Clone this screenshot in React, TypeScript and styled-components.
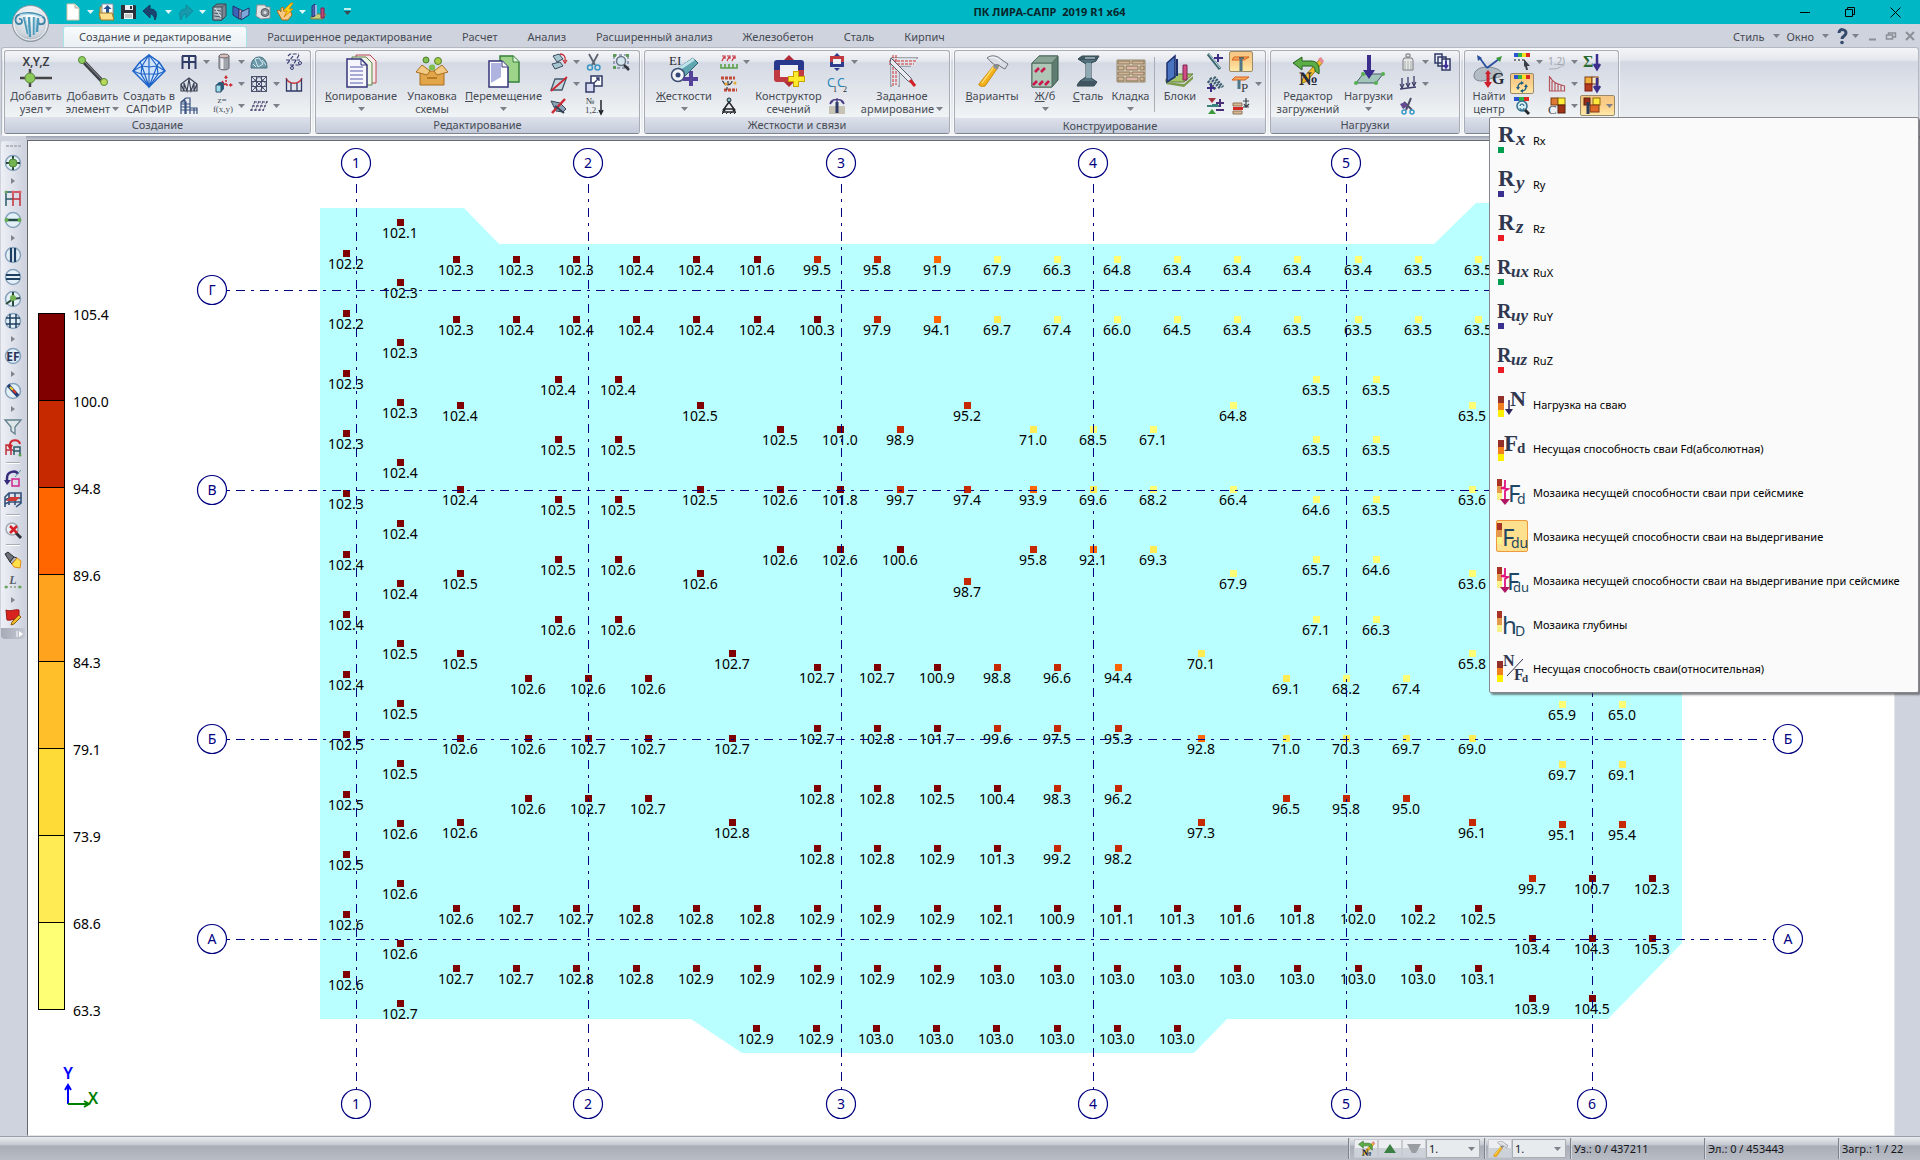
import React from "react";
import styled, { createGlobalStyle, css } from "styled-components";

/* ---------- base ---------- */

const Global = createGlobalStyle`
  html, body { margin: 0; padding: 0; }
  *, *::before, *::after { box-sizing: border-box; }
  body { background: #cfd3dd; }
  button, select { font: inherit; color: inherit; }
`;

const UI_FONT = '"Noto Sans", "Open Sans", sans-serif';
const SERIF = "Liberation Serif, serif";
const SANS = "Noto Sans, sans-serif";

const App_ = styled.div`
  position: relative;
  display: flex;
  flex-direction: column;
  min-height: 100vh;
  overflow: hidden;
  background: #cfd3dd;
  color: #474b55;
  font: 11px/13px ${UI_FONT};
`;

const PlainButton = styled.button`
  display: inline-flex;
  align-items: center;
  justify-content: center;
  padding: 0;
  border: 0;
  background: none;
`;

const Glyph = styled.svg`
  display: block;
  flex: none;
  overflow: visible;
`;

/* ---------- title bar ---------- */

const TitleBar = styled.header`
  display: grid;
  grid-template-columns: 1fr auto 1fr;
  align-items: center;
  height: 24px;
  padding: 0 14px 0 62px;
  background: #00b7c6;
`;

const QuickBar = styled.div`
  display: flex;
  align-items: center;
  height: 22px;
`;

const QuickButton = styled(PlainButton)`
  width: 22px;
  height: 22px;
`;

const QuickArrow = styled(PlainButton)`
  width: 12px;
  height: 22px;
`;

const Title = styled.h1`
  margin: 0;
  padding-left: 131px;
  color: #06262b;
  font-size: 11px;
  line-height: 22px;
  font-weight: 700;
  white-space: pre;
`;

const WindowButtons = styled.div`
  display: flex;
  justify-content: flex-end;
  gap: 23px;
`;

const WindowButton = styled(PlainButton)`
  width: 22px;
  height: 22px;
`;

const Orb = styled(PlainButton)`
  position: absolute;
  left: 11px;
  top: 4px;
  width: 39px;
  height: 39px;
`;

/* ---------- tabs ---------- */

const TabRow = styled.nav`
  display: flex;
  align-items: flex-end;
  height: 23px;
  padding: 0 4px 0 63px;
`;

const Tab = styled.button<{ $active?: boolean }>`
  height: 21px;
  padding: 0 15px;
  border: 0;
  background: none;
  line-height: 20px;
  white-space: nowrap;
  ${(p) =>
    p.$active &&
    css`
      margin-right: 5px;
      border: 1px solid #a9e3ea;
      border-bottom: 0;
      border-radius: 3px 3px 0 0;
      background: linear-gradient(#f8fbfc, #e9eff4);
    `}
`;

const TabTools = styled.div`
  display: flex;
  align-items: center;
  gap: 7px;
  height: 22px;
  margin-left: auto;
`;

const TextButton = styled(PlainButton)<{ $tight?: boolean }>`
  gap: ${(p) => (p.$tight ? 4 : 8)}px;
`;

/* ---------- ribbon ---------- */

const Ribbon = styled.section`
  display: flex;
  gap: 4px;
  height: 89px;
  margin: 0 1px;
  padding: 2px;
  border: 1px solid #b4b8c0;
  border-bottom: 2px solid #f6f8fa;
  border-radius: 3px;
  background: linear-gradient(#f4f5f8 0, #e4e7ed 12px, #d3d7e2 14px, #e2e6ec 45px, #eef2f3 100%);
`;

const RibbonEdge = styled.div`
  height: 4px;
  margin-left: 26px;
  background: linear-gradient(#9aa0ad, #c5cad6);
`;

const Group = styled.section<{ $width: number }>`
  display: flex;
  flex-direction: column;
  flex: none;
  width: ${(p) => p.$width}px;
  height: 84px;
  border: 1px solid #a9acb4;
  border-bottom-color: #7e828b;
  border-radius: 3px;
  overflow: hidden;
  background: linear-gradient(#f4f5f8 0, #e4e7ed 10px, #d5d9e4 12px, #e2e6ec 42px, #f0f4f5 66px);
  box-shadow: 0 0 0 1px rgba(255, 255, 255, 0.7);
`;

const GroupBody = styled.div<{ $pad: number }>`
  display: flex;
  flex: 1;
  padding-left: ${(p) => p.$pad}px;
`;

const Caption = styled.h2`
  margin: 0;
  height: 16px;
  background: linear-gradient(#dde1eb, #c3cad9);
  font-size: 11px;
  line-height: 16px;
  font-weight: 400;
  text-align: center;
`;

const Big = styled.button<{ $width: number }>`
  display: flex;
  flex-direction: column;
  align-items: center;
  flex: none;
  width: ${(p) => p.$width}px;
  padding: 2px 0 0;
  border: 0;
  background: none;
  line-height: 13px;
  white-space: nowrap;
`;

const BigArt = styled.span`
  display: flex;
  align-items: center;
  justify-content: center;
  height: 35px;
  margin-bottom: 1px;
`;

const Line = styled.span`
  display: flex;
  align-items: center;
  justify-content: center;
  gap: 2px;
  height: 13px;
`;

const Column = styled.div<{ $gap?: number; $width?: number }>`
  display: grid;
  grid-auto-rows: 22px;
  flex: none;
  width: ${(p) => p.$width ?? 35}px;
  margin-left: ${(p) => p.$gap ?? 0}px;
`;

const Tool = styled.button<{ $on?: boolean; $wide?: boolean }>`
  display: flex;
  align-items: center;
  justify-content: flex-start;
  width: ${(p) => (p.$wide ? 35 : 24)}px;
  height: 21px;
  padding: 0;
  border: 1px solid transparent;
  border-radius: 2px;
  background: none;
  ${(p) =>
    p.$on &&
    css`
      border-color: #9a8a6c;
      background: linear-gradient(#f5c684, #fbd08a 50%, #ffe9a8);
    `}
`;

const ToolIcon = styled.span`
  display: flex;
  justify-content: center;
  flex: none;
  width: 22px;
`;

const ToolArrow = styled.span`
  display: flex;
  padding-left: 3px;
`;

const Divider = styled.div`
  width: 1px;
  height: 55px;
  margin: 6px 2px;
  background: #a9adb5;
`;

/* ---------- work area ---------- */

const Work = styled.main`
  display: flex;
  flex: 1;
  min-height: 0;
`;

const SideBar = styled.aside`
  flex: none;
  width: 27px;
  padding-left: 1px;
`;

const SideTools = styled.div`
  display: flex;
  flex-direction: column;
  align-items: center;
  width: 24px;
  margin-top: 1px;
  border-radius: 3px;
  overflow: hidden;
  background: linear-gradient(90deg, #eef0f6, #cdd2de);
`;

const Grip = styled.div`
  width: 15px;
  height: 2px;
  margin: 4px 0 5px;
  background: repeating-linear-gradient(90deg, #b2b6bf 0 3px, transparent 3px 4px);
`;

const SideButton = styled(PlainButton)`
  width: 24px;
  height: 22px;
`;

const SideMore = styled(PlainButton)`
  width: 24px;
  height: 13px;
`;

const SideRule = styled.hr`
  width: 14px;
  height: 8px;
  margin: 0;
  border: 0;
  background: linear-gradient(transparent 3px, #a9adb6 3px 4px, #fff 4px 5px, transparent 5px);
`;

const SideEnd = styled.div`
  display: flex;
  align-items: center;
  justify-content: flex-end;
  align-self: stretch;
  height: 11px;
  padding-right: 2px;
  border-radius: 0 0 3px 3px;
  background: linear-gradient(90deg, #a5aab6, #c3c8d3);
`;

const Viewport = styled.section`
  position: relative;
  flex: 1;
  min-width: 0;
  margin-right: 25px;
  border: 1px solid #e4e5e8;
  border-top-color: #66686d;
  border-left-color: #66686d;
  overflow: hidden;
  background: #fff;
`;

const Plan = styled.svg`
  display: block;
  font: 14px ${UI_FONT};
`;

const Legend = styled.ol`
  position: absolute;
  left: 10px;
  top: 172px;
  margin: 0;
  padding: 0;
  list-style: none;
  color: #000;
  font-size: 14px;
  line-height: 18px;
`;

const LegendStep = styled.li<{ $fill?: string }>`
  display: flex;
  gap: 8px;
  height: 87px;
  &::before {
    content: "";
    width: 27px;
    height: ${(p) => (p.$fill ? 88 : 0)}px;
    border: ${(p) => (p.$fill ? "1px solid #000" : "0")};
    background: ${(p) => p.$fill ?? "none"};
  }
`;

const LegendValue = styled.span`
  height: 18px;
  margin-top: -7px;
`;

/* ---------- status bar ---------- */

const StatusBar = styled.footer`
  display: flex;
  align-items: center;
  justify-content: flex-end;
  height: 24px;
  border-top: 1px solid #9a9ea8;
  background: linear-gradient(#e9ebee 0, #c3c7d0 8px, #a9adb7 9px, #b9bdc5 100%);
  color: #14161a;
`;

const StatusPart = styled.div<{ $width: number; $pad?: number }>`
  display: flex;
  align-items: center;
  flex: none;
  width: ${(p) => p.$width}px;
  height: 21px;
  padding-left: ${(p) => p.$pad ?? 3}px;
  border-left: 1px solid #7e828a;
  box-shadow: inset 1px 0 0 #d5d8de;
  white-space: nowrap;
`;

const StatusButton = styled(PlainButton)`
  flex: none;
  width: 24px;
  height: 19px;
  border: 1px solid #c7cbd1;
  background: linear-gradient(#eceef1 50%, #cdd2d8 50%);
`;

const Picker = styled.label`
  display: flex;
  align-items: center;
  width: 54px;
  height: 19px;
  border: 1px solid #a9adb4;
  background: #e8ebee;
`;

const PickerSelect = styled.select`
  width: 41px;
  height: 17px;
  padding: 0 2px;
  border: 0;
  appearance: none;
  background: none;
`;

/* ---------- drop-down menu ---------- */

const Menu = styled.ul`
  position: absolute;
  top: 117px;
  right: 1px;
  z-index: 5;
  width: 430px;
  margin: 0;
  padding: 0 0 2px;
  border: 1px solid #85878c;
  border-radius: 2px;
  background: #fafafa;
  box-shadow: 2px 2px 2px rgba(60, 60, 60, 0.6);
  list-style: none;
`;

const MenuButton = styled.button`
  display: flex;
  align-items: center;
  gap: 5px;
  width: 100%;
  height: 44px;
  padding: 0 6px;
  border: 0;
  background: none;
  color: #000;
  text-align: left;
  white-space: nowrap;
`;

const MenuArt = styled.span<{ $on?: boolean }>`
  display: flex;
  flex: none;
  width: 32px;
  height: 32px;
  border: 1px solid ${(p) => (p.$on ? "#f0983c" : "transparent")};
  border-radius: 2px;
  background: ${(p) => (p.$on ? "#ffe08f" : "none")};
`;

/* ---------- drawings ---------- */

function Art({ s = 18, w, h, children }: { s?: number; w?: number; h?: number; children: React.ReactNode }) {
  const W = w ?? s;
  const H = h ?? s;
  return (
    <Glyph width={W} height={H} viewBox={`0 0 ${W} ${H}`} fill="none" aria-hidden="true">
      {children}
    </Glyph>
  );
}

const Arrow = ({ fill = "#7d8088" }: { fill?: string }) => (
  <Glyph width="7" height="4" viewBox="0 0 7 4" aria-hidden="true">
    <path d="M0 0h7L3.5 4z" fill={fill} />
  </Glyph>
);

const Side = () => (
  <Glyph width="4" height="6" viewBox="0 0 4 6" aria-hidden="true">
    <path d="M0 0l4 3-4 3z" fill="#80848d" />
  </Glyph>
);

const NAVY = "#2f3a66";
const GREEN = "#3c9a3c";

const Hammer = ({ s = 18 }: { s?: number }) => (
  <Glyph width={s} height={s} viewBox="0 0 32 32" fill="none" aria-hidden="true">
    <path d="M19 9l4 2L9 31c-2 1-7 0-6-2z" fill="#f3b21b" stroke="#c98a0c" />
    <path d="M19 10L6 28" stroke="#ffd867" strokeWidth="1.500" />
    <path d="M19 8l4 3-2 4-4-3z" fill="#8a8f99" />
    <path d="M11 3c5-4 11-2 15 2l6 4-3 5-4-2c-1-2-4-3-6-2l-4-3c-1-2-3-3-4-4z" fill="#d9dde3" stroke="#6f7580" />
    <path d="M13 3c4-2 8 0 12 4" stroke="#fff" />
  </Glyph>
);

const LoadEdit = ({ s = 18 }: { s?: number }) => (
  <Glyph width={s} height={s} viewBox="0 0 32 32" fill="none" aria-hidden="true">
    <path d="M22 11l6-7 3 3-16 19-6 3 2-6z" fill="#f2bc2c" stroke="#a37412" />
    <path d="M26 4l3-2 3 4-2 3z" fill="#e58b95" />
    <path d="M1 8l9-6v4h9c6 0 9 4 8 13l-4-3c0-4-2-5-5-5h-8v4z" fill="#5cad46" stroke="#25631c" />
    <text x="7" y="30" fontFamily={SERIF} fontWeight="700" fontSize="19" fill="#262a3a">№</text>
  </Glyph>
);

const quick = {
  doc: <Art><path d="M3 1h8l4 4v12H3z" fill="#fff" stroke="#d5c9a8" /><path d="M11 1v4h4" fill="#ddd" stroke="#b9b09a" /></Art>,
  open: <Art><path d="M2 4h13v12H2z" fill="#f6d071" stroke="#a77d25" /><path d="M4 1h11v10H4z" fill="#f8fafc" stroke="#8892a5" /><path d="M9.500 2l4 4h-2.500v5h-3V6H5.500z" fill="#24508f" /><path d="M1 10h13l2 7H3z" fill="#fbdf8d" stroke="#a77d25" /></Art>,
  save: <Art><path d="M1 2h14l1 1v13H1z" fill="#2c3039" /><path d="M5 2h8v5H5z" fill="#e9edf1" /><path d="M10 3h2v3h-2z" fill="#2c3039" /><path d="M4 10h9v6H4z" fill="#f6f7f8" /><path d="M5 12h7M5 14h7" stroke="#999" /></Art>,
  undo: <Art><path d="M8 2v4c6 0 8 4 5 11-1-5-3-6-5-6v4L1 8z" fill="#1b4470" stroke="#15365b" /></Art>,
  redo: <Art><path d="M10 2v4C4 6 2 10 5 17c1-5 3-6 5-6v4l7-7z" fill="#159bad" stroke="#14899a" /></Art>,
  server: <Art><path d="M3 4l4-3h9v12l-4 4H3z" fill="#788592" stroke="#3b4650" /><path d="M3 4h9v13H3z" fill="#a6b5bf" stroke="#3b4650" /><path d="M12 4l4-3M4 7l7 1M4 10l7 1M4 13l7 1" stroke="#4a5964" /><path d="M5 5l6 9" stroke="#e2eaee" /></Art>,
  book: <Art><path d="M1 3l6 3v10l-6-4z" fill="#3c64b8" stroke="#22336c" /><path d="M7 6l4 2v7l-4 1z" fill="#e7a7b0" stroke="#22336c" /><path d="M9 9l8-4v7l-8 5z" fill="#7fa6d9" stroke="#22336c" /></Art>,
  camera: <Art><path d="M3 2h8l1 2h4v11l-9 1-5-3z" fill="#e3e5e7" stroke="#8e8f92" /><circle cx="11" cy="9.500" r="4" fill="#8b8e94" stroke="#55585e" /><circle cx="11" cy="9.500" r="1.500" fill="#d8e2ea" /></Art>,
  bolt: <Art><path d="M1 8l2-1 2 2V5l2-1 1 4 2-1 5 2 1 3-4 5H6z" fill="#f7c984" stroke="#a86c1a" /><path d="M15 0L7 8h4l-3 6 9-8h-4l4-6z" fill="#ffd21e" stroke="#d28e05" /></Art>,
  model: <Art><path d="M1 14l4-3h11l-3 5H1z" fill="#c7cf7b" stroke="#7a8141" /><path d="M2 3l3-2v12l-3 1z" fill="#4b66b4" stroke="#27386f" /><path d="M5 2h2v10H5z" fill="#9cb2e0" /><path d="M11 5h3v10h-3z" fill="#c0467c" stroke="#7d2450" /></Art>,
};

const big = {
  xyz: <Art w={40} h={34}><text x="20" y="12" textAnchor="middle" fontFamily={SANS} fontSize="12" fontWeight="600" fill="#3c3c44">X,Y,Z</text><path d="M4 24h32M14 15v18" stroke="#444" strokeWidth="2.500" /><circle cx="14" cy="24" r="5" fill="#8bc95b" stroke="#5c8740" /></Art>,
  element: <Art w={34} h={34}><path d="M7 7l20 21" stroke="#3f4147" strokeWidth="4" /><path d="M8 7l19 20" stroke="#8f949c" /><circle cx="6" cy="6" r="3.500" fill="#8fd160" stroke="#57863a" /><circle cx="28" cy="28" r="3.500" fill="#b9d95b" stroke="#57863a" /></Art>,
  sapfir: <Art w={34} h={34}><path d="M17 1l10 7 6 9-16 16L1 17l7-9z" fill="#cfe3fa" stroke="#1e63c8" strokeWidth="1.500" /><path d="M17 1v32M17 1l-7 11 7 21 8-21zM8 8l2 4-1 8 8 13 9-13-1-8 2-4M1 17l9-5 7 1 8-1 8 5M1 17l8 3h17l7-3" stroke="#1e63c8" strokeWidth="1.200" /></Art>,
  copy: <Art w={34} h={34}><path d="M12 1h14l6 6v22H12z" fill="#fbe9ea" stroke="#b44a52" /><path d="M8 3h14l6 6v22H8z" fill="#eef6e8" stroke="#5d8447" /><path d="M3 5h14l6 6v22H3z" fill="#f5f6fb" stroke="#34357a" strokeWidth="1.500" /><path d="M17 5v6h6" stroke="#34357a" /><path d="M6 13h13M6 17h13M6 21h13M6 25h13M6 29h13" stroke="#8d90c8" strokeWidth="1.500" /></Art>,
  box: <Art w={34} h={34}><circle cx="11" cy="6" r="3" fill="#7fbf52" stroke="#4b7d2d" /><circle cx="23" cy="7" r="3.500" fill="#a9cc46" stroke="#4b7d2d" /><path d="M5 17h24v14H5z" fill="#e3a549" stroke="#a66f1f" /><path d="M1 18l6-7 8 6-3 4zM33 18l-6-7-8 6 3 4z" fill="#f3c983" stroke="#a66f1f" /><path d="M12 23h10v2H12z" fill="#b77b28" /><path d="M14 12c2-2 5-2 6 0v4h-6z" fill="#7fbf52" /></Art>,
  move: <Art w={34} h={34}><path d="M13 2h13l6 6v20H13z" fill="#9dd48a" stroke="#35803a" strokeWidth="1.500" /><path d="M26 2v6h6" fill="#e4f4df" stroke="#35803a" /><path d="M2 7h13l6 6v20H2z" fill="#fff" stroke="#34357a" strokeWidth="1.500" /><path d="M4 9h10v14l-10 6z" fill="#aeb3e0" /><path d="M15 7v6h6" fill="#fff" stroke="#34357a" /></Art>,
  stiff: <Art w={34} h={34}><path d="M7 17L26 4l5 5-16 16z" fill="#5fa6b1" stroke="#2b6370" /><path d="M9 17L27 5" stroke="#bfe5ea" strokeWidth="3" /><circle cx="11" cy="21" r="6.500" fill="#f0f3f7" stroke="#3d4d73" strokeWidth="1.500" /><circle cx="11" cy="21" r="2.500" fill="#344776" /><text x="2" y="11" fontFamily={SERIF} fontSize="13" fill="#2a2a33">EI</text><path d="M24 17v15M16 25h15" stroke="#54419a" strokeWidth="4" /></Art>,
  section: <Art w={34} h={34}><path d="M17 1l5 5v22l-5 5-5-5V6z" fill="#b02b35" /><path d="M5 6h24a3 3 0 013 3v9H2V9a3 3 0 013-3z" fill="#28388c" /><path d="M2 16h30v9a3 3 0 01-3 3H5a3 3 0 01-3-3z" fill="#c03a42" /><path d="M8 11h18v12H8z" fill="#eef0f6" /><path d="M24 17v16M16 25h17" stroke="#c9a400" strokeWidth="6" /><path d="M24 18v14M17 25h15" stroke="#ffea2b" strokeWidth="4" /></Art>,
  rebar: <Art w={34} h={34}><path d="M6 4h27M6 12h20M6 4v29M14 12v21" stroke="#8a919b" strokeWidth="1.500" /><path d="M6 4h25v8H14v19H6z" fill="#dfe3ea" opacity=".8" /><path d="M8 1v31M11 1v30M4 7h28M4 10h25" stroke="#cf2e32" strokeDasharray="3 1" /><path d="M6 4l20 20 3 6-6-3L5 9z" fill="#e9eaf0" stroke="#5b6170" /><path d="M25 26l5 6" stroke="#d51f26" strokeWidth="3" /></Art>,
  concrete: <Art w={30} h={34}><path d="M2 9l7-7h19v24l-6 7H2z" fill="#5f7d70" stroke="#37564a" /><path d="M2 9h20v24H2z" fill="#b0c7b8" stroke="#4f6b5e" /><path d="M2 9l7-7h19l-6 7z" fill="#8aa596" stroke="#4f6b5e" /><path d="M5 18l4-4M11 18l4-4M3 31l4-4M9 31l4-4M15 31l4-4" stroke="#c8174e" strokeWidth="2.500" /></Art>,
  steel: <Art w={30} h={34}><path d="M5 5l4-3h17l-3 5-5 2v15l6 4-3 4H4l3-5 6-4V10z" fill="#52707b" stroke="#2e444e" /><path d="M13 9l5 0v15l-5 0z" fill="#8fa9b3" /><path d="M5 5l4-3h17l-3 4H5zM4 30l3-3h17l-3 5H4z" fill="#3f5660" /><path d="M12 4h10" stroke="#d8e7ed" /></Art>,
  brick: <Art w={30} h={28}><path d="M1 3h28v22H1z" fill="#e0d6c0" stroke="#96876a" /><path d="M2 4h12v3H2zM16 4h12v3H16zM2 9h6v4H2zM10 9h12v4H10zM24 9h4v4h-4zM2 15h12v3H2zM16 15h12v3H16zM2 20h6v4H2zM10 20h12v4H10zM24 20h4v4h-4z" fill="#cdb796" stroke="#8c7558" /><path d="M11 10h10v2H11zM17 16h10v1H17zM11 21h10v2H11z" fill="#dfb5ab" /></Art>,
  blocks: <Art w={30} h={34}><path d="M1 25l9-5h18l-9 8H1z" fill="#a3c469" stroke="#5f7c37" /><path d="M1 28l18 2v3L1 30zM19 30l9-8v3l-9 8z" fill="#7d9c4c" /><path d="M2 9l8-7v21l-8 5z" fill="#4a74bf" stroke="#1d2f6f" strokeWidth="1.500" /><path d="M12 5v17" stroke="#1d2f6f" strokeWidth="2" /><path d="M18 11h4v15h-4z" fill="#d34c86" stroke="#7d2450" /></Art>,
  load: <Art w={34} h={34}><path d="M4 29l7-9h20l-7 9z" fill="#a2c6ba" stroke="#43586b" /><path d="M17 1v17" stroke="#3b2d8c" strokeWidth="4" /><path d="M11 16h12l-6 9z" fill="#3b2d8c" /><circle cx="4" cy="29" r="2" fill="#56b04e" /><circle cx="24" cy="29" r="2" fill="#56b04e" /><circle cx="31" cy="20" r="2" fill="#56b04e" /><circle cx="11" cy="20" r="2" fill="#56b04e" /></Art>,
  centre: <Art w={34} h={34}><path d="M2 22c0-6 6-9 13-9s15 3 15 7-5 3-9 4-8 3-12 3-7-2-7-5z" fill="#b3bcc4" stroke="#7c868f" /><path d="M15 14L7 3M15 14l12-9" stroke="#2a4f9c" strokeWidth="1.800" /><path d="M5 1l5 3-4 3z" fill="#2a4f9c" /><path d="M30 2l-2 6-4-4z" fill={GREEN} /><path d="M16 19v12" stroke="#cf1f2c" strokeWidth="3" /><path d="M12 28h8l-4 6zM13 20h6l-3-4z" fill="#cf1f2c" /><text x="20" y="30" fontFamily={SERIF} fontWeight="700" fontSize="16" fill="#262a33">G</text></Art>,
};

const small = {
  frame: <Art><path d="M2 3h14M2 9h14M2.500 3v13M9 3v13M15.500 3v13" stroke={NAVY} strokeWidth="2" /></Art>,
  truss: <Art><path d="M1 16V9l8-6 8 6v7zM4 16V8l3 8 2-12 2 12 3-8v8M1 9l3 7M17 9l-3 7" stroke="#3c4355" strokeWidth="1.200" /></Art>,
  building: <Art><path d="M1 17V5l5-4h4v10h7v6M1 7h9M1 10h9M1 13h16M5 1v16M10 11v6M14 11v6M6 17V5H1" stroke="#36507f" strokeWidth="1.200" /></Art>,
  cylinder: <Art><path d="M4 3v12c0 2.500 10 2.500 10 0V3z" fill="#a0a3aa" stroke="#676a72" /><path d="M7 4v12" stroke="#e9eaee" strokeWidth="3" /><ellipse cx="9" cy="3" rx="5" ry="2" fill="#ddbcbc" stroke="#676a72" /></Art>,
  extrude: <Art><path d="M1 10l3-3h5v7l-3 3H1z" fill="#2b5c7c" /><path d="M1 10h5v7H1z" fill="#9fe0ea" stroke="#2b4a66" /><path d="M11 10V2M11 10H17M10 10l-3-4" stroke="#cb2d34" strokeWidth="1.500" strokeDasharray="2 1" /><path d="M11 0l2 3H9zM18 10l-3-2v4z" fill="#cb2d34" /></Art>,
  fxy: <Art w={20}><text x="8" y="6" textAnchor="middle" fontFamily={SERIF} fontSize="9" fill="#4c5262">z=</text><text x="9" y="15" textAnchor="middle" fontFamily={SERIF} fontSize="9" fill="#4c5262">f(x,y)</text></Art>,
  dome: <Art><path d="M1 15c0-8 4-11 8-11s8 3 8 11z" fill="#6d99ab" stroke="#47707f" /><path d="M5 6l4-1 4 6-5 3zM3 11l3 3M12 7l4 5" stroke="#d3e8ee" /></Art>,
  mesh: <Art><path d="M1.500 1.500h15v15h-15zM1.500 6.500h15M1.500 11.500h15M6.500 1.500v15M11.500 1.500v15M1.500 1.500l15 15M16.500 1.500l-15 15M1.500 9l7.500 7.500L16.500 9 9 1.500z" stroke="#3d4461" strokeWidth=".9" /></Art>,
  plate: <Art><path d="M4 5h14M2 9h14M0 13h14M5 4L1 14M9 4L5 14M13 4L9 14M17 4l-4 10" stroke="#4a466f" strokeDasharray="3 1" /></Art>,
  scheme: <Art><path d="M3 3l2-2h9M1 7h14M5 12h10M8 3L2 11M14 2L7 14" stroke="#3a3f75" strokeDasharray="4 1.500" strokeWidth="1.200" /><circle cx="15" cy="10" r="1.500" stroke="#3a3f75" /><circle cx="7" cy="15" r="1.500" stroke="#3a3f75" /></Art>,
  cable: <Art><path d="M1 3c3 7 13 7 16 0" stroke="#c8353a" strokeWidth="1.500" /><path d="M1.500 4v12h15V4M6 8v8M12 8v8" stroke={NAVY} strokeWidth="1.300" /></Art>,
  rotate: <Art><path d="M3 3l6-2 4 5-6 3zM2 11l8-2 3 4-8 3z" fill="#a6c6d2" stroke="#3d4b5d" /><path d="M10 1c4 0 6 3 5 7M13 7l2 3 2-3" stroke="#c92b34" strokeWidth="1.300" /></Art>,
  skew: <Art><path d="M5 4h11l-4 11H1z" fill="#c3d7df" stroke="#44566a" strokeWidth="1.300" /><path d="M1 16L17 2" stroke="#cc2934" strokeWidth="1.800" /></Art>,
  cutx: <Art><path d="M1 4l9 2 6 6-3 3-7-1z" fill="#8ba2b7" stroke="#374456" /><path d="M2 16L15 2" stroke="#cc2934" strokeWidth="2.500" /><path d="M5 9l9 7" stroke="#374456" strokeWidth="2" /></Art>,
  scissors: <Art><path d="M4 1l6 11M13 1L7 12" stroke="#5c6370" strokeWidth="1.800" /><circle cx="5" cy="14.500" r="2.500" stroke="#3a98c4" strokeWidth="1.500" /><circle cx="12.500" cy="14.500" r="2.500" stroke="#3a98c4" strokeWidth="1.500" /></Art>,
  scale: <Art><path d="M6 1h11v10H6z" fill="#fff" stroke={NAVY} strokeWidth="1.500" /><path d="M1 8h8v9H1z" fill="#d6d9ef" stroke={NAVY} strokeWidth="1.500" /><path d="M9 8l5-5M11 3h3v3" stroke={NAVY} strokeWidth="1.300" /></Art>,
  renumber: <Art><text x="1" y="7" fontFamily={SERIF} fontSize="9" fill="#3b3f49">№</text><text x="0" y="16" fontFamily={SERIF} fontSize="9" fill="#3b3f49">1,2.</text><path d="M16 3v13M14 13l2 4 2-4" stroke="#23252d" strokeWidth="1.500" /></Art>,
  zoomsel: <Art><path d="M2 2h14v13H2z" stroke="#50648a" strokeDasharray="3 2" /><circle cx="9" cy="8" r="4.500" fill="#d5e6ee" stroke="#69798a" strokeWidth="1.500" /><path d="M12 12l5 5" stroke="#30343c" strokeWidth="2.500" /><path d="M1 1h3v3H1zM14 1h3v3h-3zM1 13h3v3H1z" fill="#5d9a55" /></Art>,
  supports: <Art><path d="M1 11v4h16v-4M5 11v4M9 11v4M13 11v4" stroke="#58a04a" strokeWidth="1.600" /><path d="M2 8l2-4M7 8l2-4M12 8l2-4M2 3h3v3M7 3h3v3M12 3h3v3" stroke="#c92f39" strokeWidth="1.200" /></Art>,
  springs: <Art><path d="M1 3h14M4 15h13" stroke="#c24a38" strokeWidth="3" strokeDasharray="3 1" /><path d="M2 6c2 0 2 4 4 4M8 6v3M12 6c0 2-2 4-5 4M7 12v3" stroke="#34363d" strokeWidth="1.200" /><circle cx="6" cy="9" r="1.500" fill="#e8a62a" /><circle cx="15" cy="8" r="1.500" fill="#e8a62a" /></Art>,
  hinge: <Art><circle cx="9" cy="3" r="2" fill="#8ac5cf" stroke="#23252d" /><path d="M9 5L4 12h10zM2 15h14" stroke="#23252d" strokeWidth="1.500" /><path d="M2 17l2-2M6 17l2-2M10 17l2-2M14 17l2-2" stroke="#23252d" /><circle cx="4" cy="13" r="1.500" fill="#23252d" /><circle cx="14" cy="13" r="1.500" fill="#23252d" /></Art>,
  section: <Art><path d="M9 0l3 3H6zM9 18l3-3H6z" fill="#2f3c8e" /><path d="M2 3h14v6H2z" fill="#c03a42" /><path d="M2 9h14v5H2z" fill="#2f3c8e" /><path d="M5 6h8v5H5z" fill="#eef0f6" /></Art>,
  cc: <Art w={20}><text x="0" y="12" fontFamily={SANS} fontSize="12" fill="#2b86b8">C</text><text x="10" y="12" fontFamily={SANS} fontSize="12" fill="#2b86b8">C</text><text x="6" y="17" fontFamily={SERIF} fontSize="8" fill="#23252d">1</text><text x="16" y="17" fontFamily={SERIF} fontSize="8" fill="#23252d">2</text></Art>,
  pile: <Art><path d="M1 9h16v8H1z" fill="#c6c3b4" /><path d="M9 5v11" stroke={NAVY} strokeWidth="3" /><path d="M2 7c1-6 13-6 14 0M9 1v4M5 4l-3 3M13 4l3 3" stroke="#4b3f86" strokeWidth="1.300" /></Art>,
  barplus: <Art><path d="M2 1l12 15" stroke="#3c6670" strokeWidth="3" /><path d="M3 1l11 14" stroke="#c8e0e5" /><path d="M12 1v8M8 5h9" stroke="#3d2d86" strokeWidth="2" /></Art>,
  barsplus: <Art><path d="M4 3l10 10M8 2l9 10M2 6l8 9" stroke="#3c5d70" strokeWidth="3" strokeDasharray="2 1" /><path d="M5 9v8M1 13h8" stroke="#3d2d86" strokeWidth="2" /></Art>,
  merge: <Art><path d="M2 1h8L6 6z" fill="#a63240" /><path d="M6 12l4 5H2z" fill={GREEN} /><path d="M1 9h13M6 8h6" stroke="#39827d" strokeWidth="2" /><path d="M14 2v8M10 6h8M10 13h8" stroke="#4b2f79" strokeWidth="2" /></Art>,
  column: <Art w={20}><path d="M3 4h15l-5 3H1z" fill="#f6a863" stroke="#d56216" /><path d="M10 6v12" stroke="#4f7786" strokeWidth="3" /><path d="M8 5h5" stroke="#35586a" strokeWidth="1.500" /></Art>,
  columnP: <Art w={20}><path d="M4 2h14l-4 3H1z" fill="#f6a863" stroke="#d56216" /><path d="M8 5v9" stroke="#4f7786" strokeWidth="3" /><text x="10" y="17" fontFamily={SERIF} fontSize="13" fill="#3a3a43">P</text></Art>,
  brickload: <Art><path d="M1 6h9v3H1zM1 14h9v3H1z" fill="#d8b792" stroke="#8c7558" /><path d="M1 10h10v3H1z" fill="#d32a26" /><path d="M14 1v9M12 7l2 3 3-3M11 4h6M11 10h6" stroke="#3e424c" strokeWidth="1.200" /></Art>,
  weight: <Art><path d="M7 1h4v3H7zM5 5h8l1 2v10H4V7z" fill="#e5e7e6" stroke="#777b7d" /><path d="M6 8v8M9 8v8M12 8v8" stroke="#a7adac" /></Art>,
  dist: <Art><path d="M1 14L17 12M3 3v10M9 2v10M15 1v10" stroke="#3d3c68" strokeWidth="1.300" /><path d="M1 9l2 4 2-4M7 8l2 4 2-4M13 7l2 4 2-4" stroke="#3d3c68" strokeWidth="1.200" /></Art>,
  cutload: <Art><path d="M12 1L7 13M5 5l8 8" stroke="#4c4f68" strokeWidth="2" /><path d="M1 7l5-2 3 4-5 3z" fill="#644a90" /><circle cx="5" cy="15" r="2" stroke="#3a98c4" strokeWidth="1.500" /><circle cx="13" cy="15" r="2" stroke="#3a98c4" strokeWidth="1.500" /></Art>,
  copyload: <Art><path d="M1 1h7v9H1zM4 4h8v9H4zM8 6h8v11H8z" fill="#eceef7" stroke={NAVY} strokeWidth="1.500" /><path d="M12 8v7M10 12l2 3 2-3" stroke="#40309a" strokeWidth="1.800" /></Art>,
  palettecur: <Art><rect x="1" y="0" width="4" height="4" fill="#2c54d0" /><rect x="5" y="0" width="4" height="4" fill="#32b44a" /><rect x="9" y="0" width="4" height="4" fill="#f6df1f" /><rect x="13" y="0" width="4" height="4" fill="#df2a22" /><path d="M1 7h10" stroke="#555" strokeDasharray="2 2" strokeWidth="1.500" /><path d="M11 6l6 7-3 0 1 4-2 0-1-4-1 1z" fill="#3b3f48" /></Art>,
  palettespin: <Art><rect x="1" y="0" width="4" height="4" fill="#2c54d0" /><rect x="5" y="0" width="4" height="4" fill="#32b44a" /><rect x="9" y="0" width="4" height="4" fill="#f6df1f" /><rect x="13" y="0" width="4" height="4" fill="#df2a22" /><path d="M5 12a4 4 0 014-4M13 12a4 4 0 01-4 4" stroke="#1c5c80" strokeWidth="1.500" /><path d="M8 6l3 2-3 2zM10 14l-3 2 3 2zM3 12h4l-2 3zM11 12h4l-2-3z" fill="#1c5c80" /></Art>,
  palettezoom: <Art><rect x="1" y="0" width="5" height="4" fill="#2c54d0" /><rect x="6" y="0" width="5" height="4" fill="#32b44a" /><rect x="11" y="0" width="5" height="4" fill="#df2a22" /><circle cx="9" cy="9" r="5" fill="#d6eff5" stroke="#32718c" strokeWidth="1.500" /><path d="M12 13l4 4" stroke="#23252d" strokeWidth="3" /><path d="M7 9a2 2 0 014 0M11 11a2 2 0 01-4 0" stroke="#1c5c80" /></Art>,
  values: <Art><text x="0" y="12" fontFamily={SANS} fontSize="10" fill="#9fa3aa">1.2)</text><path d="M1 16c6 0 11 0 14-5" stroke="#a9adb3" /></Art>,
  graph: <Art><path d="M1.500 1v15h15V11C10 9 5 8 2 2M4 6v10M7 8v8M10 9v7M13 10v6" stroke="#b4545c" strokeWidth="1.200" /></Art>,
  cgrid: <Art><rect x="3" y="1" width="7" height="7" fill="#dc7a35" stroke="#7d3a14" /><rect x="10" y="1" width="7" height="7" fill="#ffee3a" stroke="#8c6b10" /><rect x="10" y="8" width="7" height="8" fill="#a03414" stroke="#552211" /><text x="0" y="17" fontFamily={SERIF} fontSize="13" fill="#42454e">C</text></Art>,
  sum: <Art><text x="0" y="14" fontFamily={SERIF} fontSize="16" fontWeight="700" fill="#2c6a33">Σ</text><path d="M14 1v14M11 11l3 5 3-5" stroke="#3b2d8c" strokeWidth="2.500" /></Art>,
  mosaicload: <Art><rect x="2" y="2" width="7" height="7" fill="#f1b13e" stroke="#7d3a14" /><rect x="9" y="2" width="6" height="7" fill="#f5ecc8" stroke="#7d3a14" /><rect x="2" y="9" width="7" height="7" fill="#b43a22" stroke="#7d1c14" /><path d="M14 3v12M11 11l3 5 3-5" stroke="#3b2d8c" strokeWidth="2.500" /></Art>,
  pilemosaic: <Art><rect x="1" y="1" width="6" height="7" fill="#9c2a18" stroke="#552211" /><rect x="10" y="1" width="7" height="7" fill="#ffe93a" stroke="#8c6b10" /><rect x="7" y="8" width="9" height="7" fill="#df6a2a" stroke="#7d3a14" /><path d="M5 5v12" stroke="#2c3b5b" strokeWidth="3" /></Art>,
};

const ring = (inner: React.ReactNode) => (
  <Art>
    <circle cx="9" cy="9" r="7.500" fill="#e3f0f8" stroke="#87a2bc" strokeWidth="1.500" />
    {inner}
  </Art>
);

const side = {
  node: ring(<><path d="M9 2v14M2 9h14" stroke="#2a4a3b" strokeWidth="2" /><circle cx="9" cy="9" r="4" fill="#72b353" stroke="#4f8a39" /></>),
  fence: <Art><path d="M2 17V3h7M2 10h7" stroke="#2b5a66" strokeWidth="1.500" /><path d="M9 17V3h7v14M9 10h7" stroke="#c0303c" strokeWidth="1.500" /><circle cx="2" cy="3" r="1.500" fill="#66a95b" /><circle cx="9" cy="3" r="1.500" fill="#e05f6a" /><circle cx="16" cy="3" r="1.500" fill="#e05f6a" /></Art>,
  bar: ring(<><path d="M2 9h14" stroke="#234c45" strokeWidth="2.500" /><circle cx="2.500" cy="9" r="2" fill="#64ae4d" /><circle cx="15.500" cy="9" r="2" fill="#64ae4d" /></>),
  vert: ring(<path d="M7 2v14M11 2v14" stroke="#1f3f60" strokeWidth="2.200" />),
  horiz: ring(<path d="M2 7h14M2 11h14" stroke="#1f3f60" strokeWidth="2" />),
  nodebar: ring(<><path d="M9 2v14M2 14l7-5 7-1" stroke="#2a4a3b" strokeWidth="2" /><circle cx="9" cy="8" r="3" fill="#72b353" /></>),
  grid: ring(<path d="M6 2v14M12 2v14M2 6h14M2 12h14" stroke="#1f3f60" strokeWidth="1.500" />),
  ef: ring(<text x="9" y="13.500" textAnchor="middle" fontFamily={SANS} fontSize="12" fontWeight="700" fill="#2b3457">EF</text>),
  pen: ring(<><path d="M4 3l10 11" stroke="#233d73" strokeWidth="3.500" /><path d="M6 5l3 3" stroke="#f1cf2b" strokeWidth="2" /><path d="M9 8l3 3" stroke="#d9342b" strokeWidth="2" /></>),
  funnel: <Art><path d="M1 3h16l-6 7v7l-4-3v-4z" fill="#dfe6ea" stroke="#62808c" strokeWidth="1.300" /></Art>,
  invert: <Art><path d="M2 16V6h5v10M2 11h7" stroke="#c0303c" strokeWidth="1.500" /><path d="M10 16V8h6v8M9 12h7" stroke="#2b5a66" strokeWidth="1.500" /><path d="M6 8V5c1-5 9-5 10 0" stroke="#cc2733" strokeWidth="2" /><path d="M3 6h6L6 11z" fill="#cc2733" /><circle cx="16" cy="16" r="1.500" fill="#56a04c" /></Art>,
  rotate: <Art><path d="M3 13V9c0-7 9-8 11-4" stroke="#352c7c" strokeWidth="2.500" /><path d="M0 11h7l-4 5z" fill="#352c7c" /><path d="M8 10h7v7H8z" stroke="#d0268c" strokeWidth="1.500" /><path d="M17 1l-6 7" stroke="#5f9da8" /></Art>,
  floors: <Art><path d="M1 16V6l4-4h12v10l-5 4M1 9l4-2h12M1 13l4-2h12M5 2v12M11 2v12" stroke="#34517a" strokeWidth="1.600" /><path d="M2 10l4-4h10l-4 4z" fill="#d23a34" /></Art>,
  unzoom: <Art><circle cx="8" cy="8" r="6" fill="#e8eef1" stroke="#9fa9b2" strokeWidth="1.500" /><path d="M12 12l5 5" stroke="#2d3038" strokeWidth="3" /><path d="M6 5l7 7M13 5l-7 7" stroke="#d61f29" strokeWidth="2.500" /></Art>,
  torch: <Art><path d="M1 3l3-2 6 5-4 5z" fill="#6d7078" stroke="#2c2e35" /><path d="M6 11l4-5 3 1-5 6z" fill="#b5b8be" stroke="#2c2e35" /><path d="M8 13l5-6 4 3-1 7-6-1z" fill="#ffe24a" stroke="#e08a1f" /></Art>,
  length: <Art><text x="9" y="11" textAnchor="middle" fontFamily={SERIF} fontStyle="italic" fontWeight="700" fontSize="12" fill="#5a5f6a">L</text><path d="M2 14h14" stroke="#62814a" strokeDasharray="2 2" /><circle cx="2" cy="14" r="1.500" fill="#66a95b" /><circle cx="16" cy="14" r="1.500" fill="#66a95b" /></Art>,
  flag: <Art><path d="M2 2c5 2 8-1 13 0v9c-5-1-7 2-12 1z" fill="#d9231f" stroke="#991714" /><path d="M8 14l7-7 2 2-7 7-3 1z" fill="#f2bc2c" stroke="#8b5f10" /></Art>,
};

/* Letters and colour bars in front of the menu entries. */
const SerifMark = ({ sub, dot }: { sub: string; dot: string }) => {
  const pair = sub.length > 1;
  return (
    <Art s={30}>
      <text x={pair ? 0 : 1} y="17" fontFamily={SERIF} fontWeight="700" fontSize={pair ? 20 : 23} fill="#303850">R</text>
      <text x={pair ? 14 : 19} y="20" fontFamily={SERIF} fontWeight="700" fontStyle="italic" fontSize={pair ? 17 : 19} fill="#303850">{sub}</text>
      <rect x="1" y="22" width="6" height="6" fill={dot} />
    </Art>
  );
};

const Swatches = ({ x = 1, y = 7, pale }: { x?: number; y?: number; pale?: boolean }) => (
  <>
    <rect x={x} y={y} width={pale ? 5 : 6} height="7" fill={pale ? "#a93425" : "#93302a"} />
    <rect x={x} y={y + 7} width={pale ? 5 : 6} height="7" fill={pale ? "#e39a4e" : "#f08020"} />
    <rect x={x} y={y + 14} width={pale ? 5 : 6} height="7" fill={pale ? "#faf28a" : "#fff000"} />
  </>
);

const Seismic = () => (
  <>
    <path d="M8 3v7l-4 1 7 1-3 2v8" stroke="#e0127c" strokeWidth="1.800" />
    <path d="M3 22h10l-5 6z" fill="#b01763" />
  </>
);

const INK = "#1f4763";

const entries: { label: string; art: React.ReactNode; on?: boolean }[] = [
  { label: "Rx", art: <SerifMark sub="x" dot="#00a050" /> },
  { label: "Ry", art: <SerifMark sub="y" dot="#3a3090" /> },
  { label: "Rz", art: <SerifMark sub="z" dot="#ec1c24" /> },
  { label: "RuX", art: <SerifMark sub="ux" dot="#00a050" /> },
  { label: "RuY", art: <SerifMark sub="uy" dot="#3a3090" /> },
  { label: "RuZ", art: <SerifMark sub="uz" dot="#ec1c24" /> },
  { label: "Нагрузка на сваю", art: <Art s={30}><Swatches /><text x="13" y="17" fontFamily={SERIF} fontWeight="700" fontSize="22" fill="#303850">N</text><path d="M12 11v10" stroke="#30265e" strokeWidth="1.500" /><path d="M8 20h8l-4 6z" fill="#30265e" /></Art> },
  { label: "Несущая способность сваи Fd(абсолютная)", art: <Art s={30}><Swatches /><text x="7" y="18" fontFamily={SERIF} fontWeight="700" fontSize="23" fill="#303850">F</text><text x="20" y="20" fontFamily={SERIF} fontWeight="700" fontSize="15" fill="#303850">d</text></Art> },
  { label: "Мозаика несущей способности сваи при сейсмике", art: <Art s={30}><Swatches x={0} y={2} pale /><Seismic /><text x="11" y="25" fontFamily={SANS} fontSize="24" fill={INK}>F</text><text x="20" y="27" fontFamily={SANS} fontSize="14" fill={INK}>d</text></Art> },
  { label: "Мозаика несущей способности сваи на выдергивание", on: true, art: <Art s={30}><Swatches x={0} y={2} pale /><text x="5" y="25" fontFamily={SANS} fontSize="24" fill={INK}>F</text><text x="14" y="27" fontFamily={SANS} fontSize="14" fill={INK}>du</text></Art> },
  { label: "Мозаика несущей способности сваи на выдергивание при сейсмике", art: <Art s={30}><Swatches x={0} y={2} pale /><Seismic /><text x="10" y="25" fontFamily={SANS} fontSize="24" fill={INK}>F</text><text x="16" y="27" fontFamily={SANS} fontSize="13" fill={INK}>du</text></Art> },
  { label: "Мозаика глубины", art: <Art s={30}><Swatches x={0} y={2} pale /><text x="5" y="25" fontFamily={SANS} fontSize="24" fill={INK}>h</text><text x="18" y="27" fontFamily={SANS} fontSize="14" fill={INK}>D</text></Art> },
  { label: "Несущая способность сваи(относительная)", art: <Art s={30}><Swatches x={0} y={8} /><text x="6" y="13" fontFamily={SERIF} fontWeight="700" fontSize="16" fill="#303850">N</text><path d="M10 23L26 6" stroke="#303850" /><text x="17" y="27" fontFamily={SERIF} fontWeight="700" fontSize="16" fill="#303850">F</text><text x="25" y="29" fontFamily={SERIF} fontWeight="700" fontSize="11" fill="#303850">d</text></Art> },
];

/* ---------- pile plan ---------- */

const scale: [string, string?][] = [
  ["105.4", "#800000"],
  ["100.0", "#c62800"],
  ["94.8", "#ff6600"],
  ["89.6", "#ffa31f"],
  ["84.3", "#ffbf2b"],
  ["79.1", "#ffdb38"],
  ["73.9", "#ffec55"],
  ["68.6", "#ffff75"],
  ["63.3"],
];

const tint = (v: number) => {
  for (let i = 1; i < scale.length; i++) if (v >= Number(scale[i][0])) return scale[i - 1][1];
  return "#ffff75";
};

type Run = { x: number; y: number; v: string; down?: boolean };

const STEP = 60.1;

/* Equally spaced piles: a run goes right, or down when it is marked so. */
const runs: Run[] = [
  { x: 346, y: 253, down: true, v: "102.2 102.2 102.3 102.3 102.3 102.4 102.4 102.4 102.5 102.5 102.5 102.6 102.6" },
  { x: 400, y: 222, down: true, v: "102.1 102.3 102.3 102.3 102.4 102.4 102.4 102.5 102.5 102.5 102.6 102.6 102.6 102.7" },
  { x: 456, y: 259, v: "102.3 102.3 102.3 102.4 102.4 101.6 99.5 95.8 91.9 67.9 66.3 64.8 63.4 63.4 63.4 63.4 63.5 63.5" },
  { x: 456, y: 319, v: "102.3 102.4 102.4 102.4 102.4 102.4 100.3 97.9 94.1 69.7 67.4 66.0 64.5 63.4 63.5 63.5 63.5 63.5" },
  { x: 456, y: 908, v: "102.6 102.7 102.7 102.8 102.8 102.8 102.9 102.9 102.9 102.1 100.9 101.1 101.3 101.6 101.8 102.0 102.2 102.5" },
  { x: 456, y: 968, v: "102.7 102.7 102.8 102.8 102.9 102.9 102.9 102.9 102.9 103.0 103.0 103.0 103.0 103.0 103.0 103.0 103.0 103.1" },
  { x: 756, y: 1028, v: "102.9 102.9 103.0 103.0 103.0 103.0 103.0 103.0" },
  { x: 558, y: 379, down: true, v: "102.4 102.5 102.5 102.5 102.6" },
  { x: 618, y: 379, down: true, v: "102.4 102.5 102.5 102.6 102.6" },
  { x: 528, y: 678, v: "102.6 102.6 102.6" },
  { x: 528, y: 738, v: "102.6 102.7 102.7" },
  { x: 528, y: 798, v: "102.6 102.7 102.7" },
  { x: 460, y: 405, v: "102.4" },
  { x: 460, y: 489, v: "102.4" },
  { x: 460, y: 573, v: "102.5" },
  { x: 460, y: 653, v: "102.5" },
  { x: 460, y: 738, v: "102.6" },
  { x: 460, y: 822, v: "102.6" },
  { x: 700, y: 405, v: "102.5" },
  { x: 700, y: 489, v: "102.5" },
  { x: 700, y: 573, v: "102.6" },
  { x: 732, y: 653, v: "102.7" },
  { x: 732, y: 738, v: "102.7" },
  { x: 732, y: 822, v: "102.8" },
  { x: 780, y: 429, v: "102.5 101.0 98.9" },
  { x: 780, y: 489, v: "102.6 101.8 99.7" },
  { x: 780, y: 549, v: "102.6 102.6 100.6" },
  { x: 967, y: 405, v: "95.2" },
  { x: 967, y: 489, v: "97.4" },
  { x: 967, y: 581, v: "98.7" },
  { x: 1033, y: 429, v: "71.0 68.5 67.1" },
  { x: 1033, y: 489, v: "93.9 69.6 68.2" },
  { x: 1033, y: 549, v: "95.8 92.1 69.3" },
  { x: 1233, y: 405, v: "64.8" },
  { x: 1233, y: 489, v: "66.4" },
  { x: 1233, y: 573, v: "67.9" },
  { x: 1316, y: 379, v: "63.5 63.5" },
  { x: 1316, y: 439, v: "63.5 63.5" },
  { x: 1316, y: 499, v: "64.6 63.5" },
  { x: 1316, y: 559, v: "65.7 64.6" },
  { x: 1316, y: 619, v: "67.1 66.3" },
  { x: 1472, y: 405, v: "63.5" },
  { x: 1472, y: 489, v: "63.6" },
  { x: 1472, y: 573, v: "63.6" },
  { x: 1472, y: 653, v: "65.8" },
  { x: 1472, y: 738, v: "69.0" },
  { x: 1472, y: 822, v: "96.1" },
  { x: 1286, y: 678, v: "69.1 68.2 67.4" },
  { x: 1286, y: 738, v: "71.0 70.3 69.7" },
  { x: 1286, y: 798, v: "96.5 95.8 95.0" },
  { x: 1201, y: 653, v: "70.1" },
  { x: 1201, y: 738, v: "92.8" },
  { x: 1201, y: 822, v: "97.3" },
  { x: 817, y: 667, v: "102.7 102.7 100.9 98.8 96.6 94.4" },
  { x: 817, y: 728, v: "102.7 102.8 101.7 99.6 97.5 95.3" },
  { x: 817, y: 788, v: "102.8 102.8 102.5 100.4 98.3 96.2" },
  { x: 817, y: 848, v: "102.8 102.8 102.9 101.3 99.2 98.2" },
  { x: 1562, y: 704, v: "65.9 65.0" },
  { x: 1562, y: 764, v: "69.7 69.1" },
  { x: 1562, y: 824, v: "95.1 95.4" },
  { x: 1532, y: 878, v: "99.7 100.7 102.3" },
  { x: 1532, y: 938, v: "103.4 104.3 105.3" },
  { x: 1532, y: 998, v: "103.9 104.5" },
];

const piles = runs.flatMap((r) =>
  r.v.split(" ").map((v, i) => ({
    v,
    x: Math.round(r.x + (r.down ? 0 : i * STEP)),
    y: Math.round(r.y + (r.down ? i * STEP : 0)),
  })),
);

const columnsAxes: [string, number][] = [["1", 356], ["2", 588], ["3", 841], ["4", 1093], ["5", 1346], ["6", 1592]];
const rowAxes: [string, number, boolean][] = [["Г", 290, false], ["В", 490, false], ["Б", 739, true], ["А", 939, true]];
const AXIS = "#000080";

const Bubble = ({ x, y, t }: { x: number; y: number; t: string }) => (
  <g>
    <circle cx={x} cy={y} r="14.500" fill="#fff" stroke={AXIS} strokeWidth="1.200" />
    <text x={x} y={y + 5} textAnchor="middle" fill={AXIS}>{t}</text>
  </g>
);

function PilePlan() {
  return (
    <Plan width="1866" height="993" viewBox="28 141 1866 993" role="img" aria-label="План свай">
      <path
        d="M320 208H464L499 244H1434L1476 203H1682V943L1608 1019H1227L1194 1053H742L691 1019H320Z"
        fill="#b9ffff"
      />
      {piles.map((p) => (
        <g key={`${p.x}-${p.y}`}>
          <rect x={p.x - 3} y={p.y - 3} width="7" height="7" fill={tint(Number(p.v))} shapeRendering="crispEdges" />
          <text x={p.x} y={p.y + 16} textAnchor="middle" fill="#000">{p.v}</text>
        </g>
      ))}
      <g stroke={AXIS} shapeRendering="crispEdges">
        {columnsAxes.map(([t, x]) => (
          <path key={t} d={`M${x + 0.5} 184V1090`} strokeDasharray="9 6 3 6" />
        ))}
        {rowAxes.map(([t, y]) => (
          <path key={t} d={`M227 ${y + 0.5}H1773`} strokeDasharray="3 6 9 6" />
        ))}
      </g>
      {columnsAxes.map(([t, x]) => (
        <g key={t}>
          {t !== "6" && <Bubble x={x} y={163} t={t} />}
          <Bubble x={x} y={1104} t={t} />
        </g>
      ))}
      {rowAxes.map(([t, y, both]) => (
        <g key={t}>
          <Bubble x={212} y={y} t={t} />
          {both && <Bubble x={1788} y={y} t={t} />}
        </g>
      ))}
      <path d="M68 1104V1086M65 1090l3-5 3 5" stroke="#0000ff" strokeWidth="2" fill="none" />
      <path d="M68 1104H88M84 1101l5 3-5 3" stroke="#008000" strokeWidth="2" fill="none" />
      <text x="68" y="1079" textAnchor="middle" fontSize="16" fontWeight="600" fill="#0000ff">Y</text>
      <text x="93" y="1104" textAnchor="middle" fontSize="16" fontWeight="600" fill="#008000">X</text>
    </Plan>
  );
}

/* ---------- composed controls ---------- */

type BigProps = { w: number; art: React.ReactNode; a: React.ReactNode; b?: React.ReactNode; more?: boolean };

const BigTool = ({ w, art, a, b, more }: BigProps) => (
  <Big type="button" $width={w}>
    <BigArt>{art}</BigArt>
    <Line>{a}</Line>
    <Line>
      {b}
      {more && <Arrow />}
    </Line>
  </Big>
);

type Item = { art: React.ReactNode; name: string; more?: boolean; on?: boolean };

const Tools = ({ items, gap, w }: { items: Item[]; gap?: number; w?: number }) => (
  <Column $gap={gap} $width={w}>
    {items.map((it) => (
      <Tool key={it.name} type="button" aria-label={it.name} $on={it.on} $wide={it.on && it.more}>
        <ToolIcon>{it.art}</ToolIcon>
        {it.more && (
          <ToolArrow>
            <Arrow />
          </ToolArrow>
        )}
      </Tool>
    ))}
  </Column>
);

const tabs = ["Создание и редактирование", "Расширенное редактирование", "Расчет", "Анализ", "Расширенный анализ", "Железобетон", "Сталь", "Кирпич"];

export default function App() {
  return (
    <App_>
      <Global />
      <TitleBar>
        <QuickBar>
          <QuickButton aria-label="Новый">{quick.doc}</QuickButton>
          <QuickArrow aria-label="Новый, варианты"><Arrow fill="#e4f6f8" /></QuickArrow>
          <QuickButton aria-label="Открыть">{quick.open}</QuickButton>
          <QuickButton aria-label="Сохранить">{quick.save}</QuickButton>
          <QuickButton aria-label="Отменить">{quick.undo}</QuickButton>
          <QuickArrow aria-label="Отменить, список"><Arrow fill="#e4f6f8" /></QuickArrow>
          <QuickButton aria-label="Повторить">{quick.redo}</QuickButton>
          <QuickArrow aria-label="Повторить, список"><Arrow fill="#e4f6f8" /></QuickArrow>
          <QuickButton aria-label="Расчет">{quick.server}</QuickButton>
          <QuickButton aria-label="Книга отчетов">{quick.book}</QuickButton>
          <QuickButton aria-label="Снимок">{quick.camera}</QuickButton>
          <QuickButton aria-label="Быстрый запуск">{quick.bolt}</QuickButton>
          <QuickArrow aria-label="Быстрый запуск, варианты"><Arrow fill="#e4f6f8" /></QuickArrow>
          <QuickButton aria-label="Модель">{quick.model}</QuickButton>
          <QuickButton aria-label="Настройка панели">
            <Art w={22} h={8}><path d="M14 1h7" stroke="#fff" strokeWidth="1.500" /><path d="M14 3h7l-3.500 4z" fill="#3a4a50" /></Art>
          </QuickButton>
        </QuickBar>
        <Title>{"ПК ЛИРА-САПР  2019 R1 x64"}</Title>
        <WindowButtons>
          <WindowButton aria-label="Свернуть"><Art s={10}><path d="M0 5.500h10" stroke="#000" /></Art></WindowButton>
          <WindowButton aria-label="Восстановить"><Art s={10}><path d="M.5 2.500h7v7h-7zM2.500 2.500v-2h7v7h-2" stroke="#000" /></Art></WindowButton>
          <WindowButton aria-label="Закрыть"><Art s={11}><path d="M.5.5l10 10M10.500.5l-10 10" stroke="#000" /></Art></WindowButton>
        </WindowButtons>
      </TitleBar>
      <TabRow>
        {tabs.map((t, i) => (
          <Tab key={t} type="button" $active={i === 0}>{t}</Tab>
        ))}
        <TabTools>
          <TextButton type="button">Стиль <Arrow /></TextButton>
          <TextButton type="button">Окно <Arrow /></TextButton>
          <TextButton type="button" $tight aria-label="Справка">
            <Art w={12} h={16}><path d="M3 5c0-5 7-4 7 0 0 3-4 3-4 6" stroke="#34496b" strokeWidth="3" /><circle cx="6" cy="14.500" r="1.800" fill="#34496b" /></Art>
            <Arrow />
          </TextButton>
          <TextButton type="button" aria-label="Свернуть окно"><Art w={12} h={10}><path d="M3 8.500h7" stroke="#8b8f97" strokeWidth="2" /></Art></TextButton>
          <TextButton type="button" aria-label="Восстановить окно"><Art w={12} h={10}><path d="M1.500 4h6v4h-6zM3.500 4V2h7v4h-3" stroke="#8b8f97" strokeWidth="1.500" /></Art></TextButton>
          <TextButton type="button" aria-label="Закрыть окно"><Art w={12} h={10}><path d="M2 1l8 8M10 1L2 9" stroke="#8b8f97" strokeWidth="2" /></Art></TextButton>
        </TabTools>
      </TabRow>
      <Orb aria-label="Меню приложения">
        <Art s={39}>
          <defs>
            <radialGradient id="orb" cx=".5" cy=".3" r=".8"><stop offset="0" stopColor="#fff" /><stop offset=".7" stopColor="#ccd2da" /><stop offset="1" stopColor="#7d8792" /></radialGradient>
          </defs>
          <circle cx="19.500" cy="19.500" r="18" fill="url(#orb)" stroke="#8b959e" />
          <circle cx="19.500" cy="19.500" r="16.500" stroke="#f4f6f8" />
          <path d="M7 11c8-3 16-3 25 2 3 2 2 7-1 7-3 1-5-2-3-4M7 11c-4 3-3 9 1 9 4 0 4-6 0-5" stroke="#3d86a8" strokeWidth="1.800" />
          <path d="M13 13l4 17M18 13l1 20M23 13v18M27 14l-1 14" stroke="#4a98ba" strokeWidth="2.400" />
          <path d="M14 13l4 17M24 13v18" stroke="#a9d5e4" />
          <path d="M9 11c8-2 15-1 22 2" stroke="#b3dcea" strokeWidth="1.300" />
        </Art>
      </Orb>

      <Ribbon>
        <Group $width={307}>
          <GroupBody $pad={3}>
            <BigTool w={56} art={big.xyz} a="Добавить" b="узел" more />
            <BigTool w={57} art={big.element} a="Добавить" b="элемент" more />
            <BigTool w={56} art={big.sapfir} a="Создать в" b="САПФИР" />
            <Tools items={[{ art: small.frame, name: "Рама", more: true }, { art: small.truss, name: "Ферма" }, { art: small.building, name: "Каркас" }]} />
            <Tools items={[{ art: small.cylinder, name: "Поверхность вращения", more: true }, { art: small.extrude, name: "Выдавливание", more: true }, { art: small.fxy, name: "Поверхность z=f(x,y)", more: true }]} />
            <Tools items={[{ art: small.dome, name: "Купол" }, { art: small.mesh, name: "Триангуляция", more: true }, { art: small.plate, name: "Сетка", more: true }]} />
            <Tools w={24} items={[{ art: small.scheme, name: "Схема" }, { art: small.cable, name: "Нить" }]} />
          </GroupBody>
          <Caption>Создание</Caption>
        </Group>

        <Group $width={325}>
          <GroupBody $pad={7}>
            <BigTool w={76} art={big.copy} a={<span><u>К</u>опирование</span>} more />
            <BigTool w={66} art={big.box} a="Упаковка" b="схемы" />
            <BigTool w={77} art={big.move} a={<span><u>П</u>еремещение</span>} more />
            <Tools gap={5} items={[{ art: small.rotate, name: "Поворот", more: true }, { art: small.skew, name: "Отсечение", more: true }, { art: small.cutx, name: "Удаление" }]} />
            <Tools w={27} items={[{ art: small.scissors, name: "Вырезать" }, { art: small.scale, name: "Масштаб" }, { art: small.renumber, name: "Перенумерация" }]} />
            <Tools w={24} items={[{ art: small.zoomsel, name: "Фрагмент" }]} />
          </GroupBody>
          <Caption>Редактирование</Caption>
        </Group>

        <Group $width={306}>
          <GroupBody $pad={6}>
            <BigTool w={66} art={big.stiff} a={<span><u>Ж</u>есткости</span>} more />
            <Tools items={[{ art: small.supports, name: "Связи", more: true }, { art: small.springs, name: "Упругое основание" }, { art: small.hinge, name: "Шарниры" }]} />
            <BigTool w={73} art={big.section} a="Конструктор" b="сечений" />
            <Tools items={[{ art: small.section, name: "Сечение", more: true }, { art: small.cc, name: "Коэффициенты C1, C2" }, { art: small.pile, name: "Сваи" }]} />
            <BigTool w={84} art={big.rebar} a="Заданное" b="армирование" more />
          </GroupBody>
          <Caption>Жесткости и связи</Caption>
        </Group>

        <Group $width={312}>
          <GroupBody $pad={6}>
            <BigTool w={62} art={<Hammer s={32} />} a={<span><u>В</u>арианты</span>} />
            <BigTool w={44} art={big.concrete} a={<span><u>Ж</u>/б</span>} more />
            <BigTool w={42} art={big.steel} a={<span><u>С</u>таль</span>} />
            <BigTool w={43} art={big.brick} a="Кладка" more />
            <Divider />
            <BigTool w={46} art={big.blocks} a="Блоки" />
            <Tools w={26} items={[{ art: small.barplus, name: "Добавить стержень" }, { art: small.barsplus, name: "Добавить группу" }, { art: small.merge, name: "Объединить" }]} />
            <Tools items={[{ art: small.column, name: "Колонна", on: true }, { art: small.columnP, name: "Колонна P", more: true }, { art: small.brickload, name: "Нагрузка на кладку" }]} />
          </GroupBody>
          <Caption>Конструирование</Caption>
        </Group>

        <Group $width={190}>
          <GroupBody $pad={4}>
            <BigTool w={66} art={<LoadEdit s={32} />} a="Редактор" b="загружений" />
            <BigTool w={55} art={big.load} a="Нагрузки" more />
            <Tools items={[{ art: small.weight, name: "Собственный вес", more: true }, { art: small.dist, name: "Распределенная нагрузка", more: true }, { art: small.cutload, name: "Удалить нагрузку" }]} />
            <Tools w={24} items={[{ art: small.copyload, name: "Копировать загружение" }]} />
          </GroupBody>
          <Caption>Нагрузки</Caption>
        </Group>

        <Group $width={155}>
          <GroupBody $pad={5}>
            <BigTool w={38} art={big.centre} a="Найти" b="центр" />
            <Tools gap={2} items={[{ art: small.palettecur, name: "Шкала", more: true }, { art: small.palettespin, name: "Обновить шкалу", on: true }, { art: small.palettezoom, name: "Шкала фрагмента" }]} />
            <Tools items={[{ art: small.values, name: "Значения", more: true }, { art: small.graph, name: "Эпюры", more: true }, { art: small.cgrid, name: "Мозаика C", more: true }]} />
            <Tools items={[{ art: small.sum, name: "Суммарные нагрузки" }, { art: small.mosaicload, name: "Мозаика нагрузок" }, { art: small.pilemosaic, name: "Мозаика свай", more: true, on: true }]} />
          </GroupBody>
          <Caption />
        </Group>
      </Ribbon>
      <RibbonEdge />

      <Work>
        <SideBar>
          <SideTools>
            <Grip />
            <SideButton aria-label="Отметка узлов">{side.node}</SideButton>
            <SideMore aria-label="Отметка узлов, варианты"><Side /></SideMore>
            <SideButton aria-label="Отметка блока">{side.fence}</SideButton>
            <SideButton aria-label="Отметка элементов">{side.bar}</SideButton>
            <SideMore aria-label="Отметка элементов, варианты"><Side /></SideMore>
            <SideButton aria-label="Вертикальные стержни">{side.vert}</SideButton>
            <SideButton aria-label="Горизонтальные стержни">{side.horiz}</SideButton>
            <SideButton aria-label="Узлы и элементы">{side.nodebar}</SideButton>
            <SideButton aria-label="Сечения и плиты">{side.grid}</SideButton>
            <SideMore aria-label="Плиты, варианты"><Side /></SideMore>
            <SideButton aria-label="Отметка по жесткости">{side.ef}</SideButton>
            <SideMore aria-label="Жесткость, варианты"><Side /></SideMore>
            <SideButton aria-label="Отметка по цвету">{side.pen}</SideButton>
            <SideMore aria-label="Цвет, варианты"><Side /></SideMore>
            <SideButton aria-label="Полифильтр">{side.funnel}</SideButton>
            <SideButton aria-label="Инверсия">{side.invert}</SideButton>
            <SideRule />
            <SideButton aria-label="Поворот вида">{side.rotate}</SideButton>
            <SideButton aria-label="Этажи">{side.floors}</SideButton>
            <SideRule />
            <SideButton aria-label="Отменить фрагментацию">{side.unzoom}</SideButton>
            <SideRule />
            <SideButton aria-label="Фонарик">{side.torch}</SideButton>
            <SideButton aria-label="Длина">{side.length}</SideButton>
            <SideMore aria-label="Длина, варианты"><Side /></SideMore>
            <SideButton aria-label="Флаги рисования">{side.flag}</SideButton>
            <SideEnd>
              <Art w={7} h={6}><path d="M1 0v6" stroke="#fff" /><path d="M3 0l4 3-4 3z" fill="#fff" /></Art>
            </SideEnd>
          </SideTools>
        </SideBar>
        <Viewport>
          <PilePlan />
          <Legend aria-label="Шкала">
            {scale.map(([value, fill]) => (
              <LegendStep key={value} $fill={fill}>
                <LegendValue>{value}</LegendValue>
              </LegendStep>
            ))}
          </Legend>
        </Viewport>
      </Work>

      <StatusBar>
        <StatusPart $width={136} $pad={5}>
          <StatusButton aria-label="Редактор загружений"><LoadEdit s={17} /></StatusButton>
          <StatusButton aria-label="Следующее"><Art w={12} h={9}><path d="M6 0l6 9H0z" fill="#3c7f42" /></Art></StatusButton>
          <StatusButton aria-label="Предыдущее"><Art w={14} h={9}><path d="M0 0h14L9 9H5z" fill="#9a9da1" /></Art></StatusButton>
          <Picker>
            <PickerSelect aria-label="Загружение" defaultValue="1."><option>1.</option></PickerSelect>
            <Arrow />
          </Picker>
        </StatusPart>
        <StatusPart $width={86}>
          <StatusButton aria-label="Варианты"><Hammer s={16} /></StatusButton>
          <Picker>
            <PickerSelect aria-label="Вариант" defaultValue="1."><option>1.</option></PickerSelect>
            <Arrow />
          </Picker>
        </StatusPart>
        <StatusPart $width={134}>Уз.: 0 / 437211</StatusPart>
        <StatusPart $width={134}>Эл.: 0 / 453443</StatusPart>
        <StatusPart $width={82}>Загр.: 1 / 22</StatusPart>
      </StatusBar>

      <Menu role="menu">
        {entries.map((e) => (
          <li key={e.label} role="none">
            <MenuButton type="button" role="menuitem">
              <MenuArt $on={e.on}>{e.art}</MenuArt>
              {e.label}
            </MenuButton>
          </li>
        ))}
      </Menu>
    </App_>
  );
}
